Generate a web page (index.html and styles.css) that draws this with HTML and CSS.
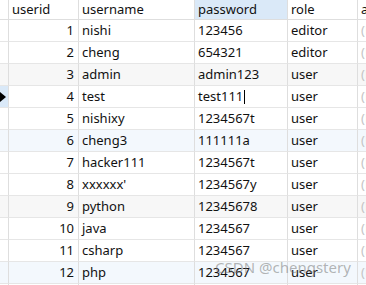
FILE: index.html
```
<!DOCTYPE html>
<html lang="en">
<head>
  <meta charset="UTF-8" />
  <title>user table</title>
  <link rel="stylesheet" href="styles.css">
</head>
<body>
  <div class="grid-wrap">
    <table class="grid">
      <thead>
        <tr>
          <th class="ind"></th>
          <th class="c-id">userid</th>
          <th class="c-name">username</th>
          <th class="c-pass active">password</th>
          <th class="c-role">role</th>
          <th class="c-more">avatar</th>
        </tr>
      </thead>
      <tbody>
        <tr><td class="ind"></td><td class="num">1</td><td>nishi</td><td>123456</td><td>editor</td><td class="null">(Null)</td></tr>
        <tr><td class="ind"></td><td class="num">2</td><td>cheng</td><td>654321</td><td>editor</td><td class="null">(Null)</td></tr>
        <tr class="alt-gray"><td class="ind"></td><td class="num">3</td><td>admin</td><td>admin123</td><td>user</td><td class="null">(Null)</td></tr>
        <tr class="current"><td class="ind"><span class="arrow"></span></td><td class="num">4</td><td>test</td><td class="editing">test111<span class="caret"></span></td><td>user</td><td class="null">(Null)</td></tr>
        <tr><td class="ind"></td><td class="num">5</td><td>nishixy</td><td>1234567t</td><td>user</td><td class="null">(Null)</td></tr>
        <tr class="alt-blue"><td class="ind"></td><td class="num">6</td><td>cheng3</td><td>111111a</td><td>user</td><td class="null">(Null)</td></tr>
        <tr><td class="ind"></td><td class="num">7</td><td>hacker111</td><td>1234567t</td><td>user</td><td class="null">(Null)</td></tr>
        <tr><td class="ind"></td><td class="num">8</td><td>xxxxxx'</td><td>1234567y</td><td>user</td><td class="null">(Null)</td></tr>
        <tr class="alt-gray"><td class="ind"></td><td class="num">9</td><td>python</td><td>12345678</td><td>user</td><td class="null">(Null)</td></tr>
        <tr><td class="ind"></td><td class="num">10</td><td>java</td><td>1234567</td><td>user</td><td class="null">(Null)</td></tr>
        <tr><td class="ind"></td><td class="num">11</td><td>csharp</td><td>1234567</td><td>user</td><td class="null">(Null)</td></tr>
        <tr class="alt-blue"><td class="ind"></td><td class="num">12</td><td>php</td><td>1234567</td><td>user</td><td class="null">(Null)</td></tr>
        <tr><td class="ind"></td><td class="num"></td><td></td><td></td><td></td><td></td></tr>
      </tbody>
    </table>
    <div class="watermark">CSDN @chengstery</div>
  </div>
</body>
</html>
```

FILE: styles.css
```
body {
  margin: 0;
  padding: 0;
  background: #fff;
  overflow: hidden;
  font-family: "Noto Sans", "Open Sans", sans-serif;
  font-size: 13px;
  color: #111;
}

.grid-wrap {
  position: relative;
  width: 366px;
  height: 285px;
  overflow: hidden;
}

.grid {
  border-collapse: separate;
  border-spacing: 0;
  table-layout: fixed;
  width: 420px;
}

.grid th,
.grid td {
  box-sizing: border-box;
  border-right: 1px solid #dedede;
  border-bottom: 1px solid #e6e6e6;
  padding: 0 3px;
  white-space: nowrap;
  overflow: hidden;
  text-align: left;
  font-weight: normal;
  line-height: 1;
}

.grid th {
  height: 20px;
  border-bottom-color: #dedede;
}

.grid td {
  height: 22px;
}

.grid .ind { width: 9px; padding: 0; position: relative; }
.grid .c-id { width: 70px; }
.grid .c-name { width: 116px; }
.grid .c-pass { width: 93px; }
.grid .c-role { width: 70px; }
.grid .c-more { width: 62px; }

.grid th.active {
  background: #dae9f8;
}

.grid td.num {
  text-align: right;
  padding-right: 4px;
}

.grid td.null {
  color: #c4c4c4;
}

.alt-gray td { background: #f7f7f7; }
.alt-blue td { background: #f3f8fd; }

.current td.ind {
  background: #dae9f8;
}

.arrow {
  position: absolute;
  left: 0;
  top: 6px;
  width: 0;
  height: 0;
  border-top: 5px solid transparent;
  border-bottom: 5px solid transparent;
  border-left: 6px solid #000;
}

.caret {
  display: inline-block;
  width: 1px;
  height: 14px;
  margin-left: 1px;
  background: #000;
  vertical-align: -3px;
}

.watermark {
  position: absolute;
  left: 215px;
  top: 257px;
  font-size: 15px;
  color: rgba(120, 120, 120, 0.55);
  white-space: nowrap;
}
```
